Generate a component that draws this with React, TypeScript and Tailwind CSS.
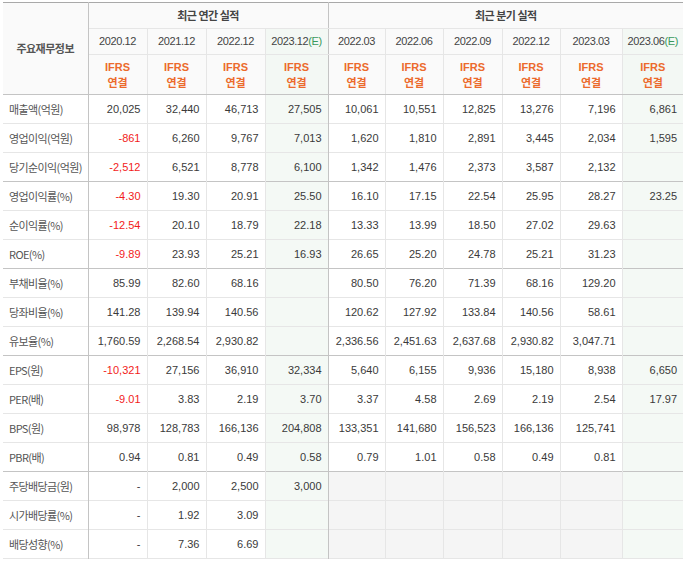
import React from 'react';

type Cell = string | null;

interface Row {
  label: string;
  values: Cell[];
  groupEnd?: boolean;
  dividend?: boolean;
}

const annual = ['2020.12', '2021.12', '2022.12', '2023.12'];
const quarter = ['2022.03', '2022.06', '2022.09', '2022.12', '2023.03', '2023.06'];

const rows: Row[] = [
  { label: '매출액(억원)', values: ['20,025', '32,440', '46,713', '27,505', '10,061', '10,551', '12,825', '13,276', '7,196', '6,861'] },
  { label: '영업이익(억원)', values: ['-861', '6,260', '9,767', '7,013', '1,620', '1,810', '2,891', '3,445', '2,034', '1,595'] },
  { label: '당기순이익(억원)', values: ['-2,512', '6,521', '8,778', '6,100', '1,342', '1,476', '2,373', '3,587', '2,132', null], groupEnd: true },
  { label: '영업이익률(%)', values: ['-4.30', '19.30', '20.91', '25.50', '16.10', '17.15', '22.54', '25.95', '28.27', '23.25'] },
  { label: '순이익률(%)', values: ['-12.54', '20.10', '18.79', '22.18', '13.33', '13.99', '18.50', '27.02', '29.63', null] },
  { label: 'ROE(%)', values: ['-9.89', '23.93', '25.21', '16.93', '26.65', '25.20', '24.78', '25.21', '31.23', null], groupEnd: true },
  { label: '부채비율(%)', values: ['85.99', '82.60', '68.16', null, '80.50', '76.20', '71.39', '68.16', '129.20', null] },
  { label: '당좌비율(%)', values: ['141.28', '139.94', '140.56', null, '120.62', '127.92', '133.84', '140.56', '58.61', null] },
  { label: '유보율(%)', values: ['1,760.59', '2,268.54', '2,930.82', null, '2,336.56', '2,451.63', '2,637.68', '2,930.82', '3,047.71', null], groupEnd: true },
  { label: 'EPS(원)', values: ['-10,321', '27,156', '36,910', '32,334', '5,640', '6,155', '9,936', '15,180', '8,938', '6,650'] },
  { label: 'PER(배)', values: ['-9.01', '3.83', '2.19', '3.70', '3.37', '4.58', '2.69', '2.19', '2.54', '17.97'] },
  { label: 'BPS(원)', values: ['98,978', '128,783', '166,136', '204,808', '133,351', '141,680', '156,523', '166,136', '125,741', null] },
  { label: 'PBR(배)', values: ['0.94', '0.81', '0.49', '0.58', '0.79', '1.01', '0.58', '0.49', '0.81', null], groupEnd: true },
  { label: '주당배당금(원)', dividend: true, values: ['-', '2,000', '2,500', '3,000', null, null, null, null, null, null] },
  { label: '시가배당률(%)', dividend: true, values: ['-', '1.92', '3.09', null, null, null, null, null, null, null] },
  { label: '배당성향(%)', dividend: true, values: ['-', '7.36', '6.69', null, null, null, null, null, null, null] },
];

// column widths, label column first
const colClasses = [
  'w-[85px]',
  'w-[59px]',
  'w-[59px]',
  'w-[59px]',
  'w-[63px]',
  'w-[57px]',
  'w-[58px]',
  'w-[59px]',
  'w-[58px]',
  'w-[62px]',
  'w-[61px]',
];
const estCols = [3, 9];

const kr = "font-['Noto_Sans_CJK_KR','Noto_Sans',sans-serif]";
const num = "font-['Liberation_Sans','Noto_Sans_CJK_KR',sans-serif]";

const colBorder = (i: number) =>
  i === 3 ? 'border-r border-r-[#c4c4c4]' : i === 9 ? '' : 'border-r border-r-[#e6e6e6]';

const App = () => {
  return (
    <div className="w-[690px] h-[563px] bg-white pt-[2px] pl-[3px]">
      <table className="table-fixed border-collapse w-[680px] border-t border-t-[#a9a9a9] border-b border-b-[#c4c4c4]">
        <colgroup>
          {colClasses.map((c, i) => (
            <col key={i} className={c} />
          ))}
        </colgroup>
        <thead>
          <tr className="h-[26px]">
            <th
              rowSpan={3}
              className={`bg-[#fafafa] border-r border-r-[#c4c4c4] border-b border-b-[#c4c4c4] text-[11px] font-semibold text-[#555] tracking-[-0.5px] ${kr}`}
            >
              주요재무정보
            </th>
            <th
              colSpan={4}
              className={`bg-[#fafafa] border-r border-r-[#c4c4c4] border-b border-b-[#e6e6e6] text-[11px] font-semibold text-[#444] tracking-[-0.5px] ${kr}`}
            >
              최근 연간 실적
            </th>
            <th
              colSpan={6}
              className={`bg-[#fafafa] border-b border-b-[#e6e6e6] text-[11px] font-semibold text-[#444] tracking-[-0.5px] ${kr}`}
            >
              최근 분기 실적
            </th>
          </tr>
          <tr className="h-[26px]">
            {[...annual, ...quarter].map((d, i) => {
              const est = estCols.includes(i);
              return (
                <th
                  key={d}
                  className={`font-normal text-[11px] text-[#444] tracking-[-0.4px] border-b border-b-[#e6e6e6] ${colBorder(i)} ${
                    est ? 'bg-[#f3f8f4]' : 'bg-[#fafafa]'
                  } ${num}`}
                >
                  {d}
                  {est && <span className="text-[#3a9a5c]">(E)</span>}
                </th>
              );
            })}
          </tr>
          <tr className="h-[40px]">
            {[...annual, ...quarter].map((d, i) => {
              const est = estCols.includes(i);
              return (
                <th
                  key={d}
                  className={`font-bold text-[11px] leading-[15px] text-[#ec6a2c] border-b border-b-[#c4c4c4] ${colBorder(i)} ${
                    est ? 'bg-[#f3f8f4]' : 'bg-[#fafafa]'
                  }`}
                >
                  <div className={num}>IFRS</div>
                  <div className={`font-semibold ${kr}`}>연결</div>
                </th>
              );
            })}
          </tr>
        </thead>
        <tbody>
          {rows.map((r) => (
            <tr
              key={r.label}
              className={`h-[29px] border-b ${r.groupEnd ? 'border-b-[#c4c4c4]' : 'border-b-[#e6e6e6]'}`}
            >
              <td
                className={`pl-[6px] text-left text-[11px] text-[#555] tracking-[-0.6px] border-r border-r-[#c4c4c4] whitespace-nowrap ${kr}`}
              >
                {r.label}
              </td>
              {r.values.map((v, i) => {
                const est = estCols.includes(i);
                const grayEmpty = r.dividend && i >= 4 && i < 9;
                const bg = est ? 'bg-[#f4f9f5]' : grayEmpty ? 'bg-[#f5f5f5]' : '';
                const neg = v !== null && v.startsWith('-') && v.length > 1;
                return (
                  <td
                    key={i}
                    className={`text-right pr-[6px] text-[11px] whitespace-nowrap ${colBorder(i)} ${bg} ${
                      neg ? 'text-[#f21b1b]' : 'text-[#3a3a3a]'
                    } ${num}`}
                  >
                    {v}
                  </td>
                );
              })}
            </tr>
          ))}
        </tbody>
      </table>
    </div>
  );
};

export default App;
